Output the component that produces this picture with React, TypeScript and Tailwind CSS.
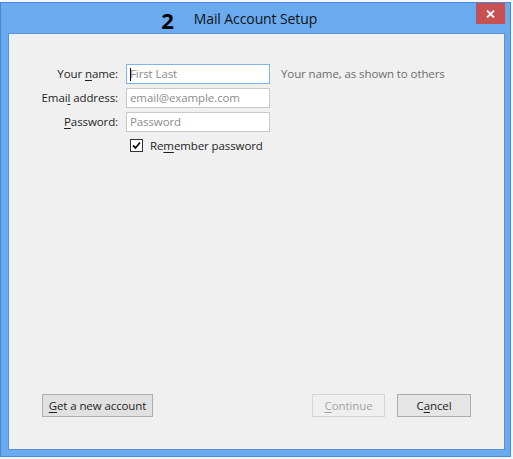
import React from "react";

const font = { fontFamily: '"Open Sans", "Noto Sans", sans-serif' };

function Field({ label, placeholder, focused = false, hint }: {
  label: [string, string, string];
  placeholder: string;
  focused?: boolean;
  hint?: string;
}) {
  return (
    <div className="flex h-[20px] items-center">
      <label className="w-[109px] shrink-0 text-right text-[#1e1e1e]">
        {label[0]}
        <span className="underline underline-offset-2">{label[1]}</span>
        {label[2]}
      </label>
      <div
        className={`ml-[8px] flex h-[20px] w-[144px] shrink-0 items-center border bg-white px-[3px] text-[#8c8c8c] ${
          focused ? "border-[#7eb4ea]" : "border-[#c9c9c9]"
        }`}
      >
        {focused ? <span className="mr-[-1px] h-[13px] w-px bg-black" /> : null}
        {placeholder}
      </div>
      {hint ? <span className="ml-[11px] text-[#6d6d6d]">{hint}</span> : null}
    </div>
  );
}

export default function App() {
  return (
    <div className="h-[459px] w-[513px] bg-[#f4f7fb] pt-[2px]" style={font}>
      <div className="flex h-[455px] w-[511px] flex-col border border-[#4a8ad4] bg-[#6aabf0] pb-[6px] pl-[7px] pr-[5px]">
        {/* title bar */}
        <div className="relative flex h-[30px] shrink-0 items-center justify-center">
          <span className="relative ml-[-2px] text-[14px] tracking-[-0.1px] text-[#111]">
            <span className="absolute right-full top-[-3px] mr-[20px] text-[22px] font-bold leading-[30px] text-black">2</span>
            Mail Account Setup
          </span>
          <button className="absolute right-[0px] top-0 flex h-[21px] w-[29px] items-center justify-center bg-[#c75050] text-white">
            <svg width="9" height="8" viewBox="0 0 9 8">
              <path d="M1 0.5 L8 7.5 M8 0.5 L1 7.5" stroke="white" strokeWidth="1.8" />
            </svg>
          </button>
        </div>

        {/* content */}
        <div className="flex flex-1 flex-col border border-[#5a92d2] bg-[#f0f0f0] pb-[32px] pt-[30px] text-[11.5px] tracking-[-0.1px]">
          <div className="flex flex-col gap-[4px]">
            <Field label={["Your ", "n", "ame:"]} placeholder="First Last" focused hint="Your name, as shown to others" />
            <Field label={["Emai", "l", " address:"]} placeholder="email@example.com" />
            <Field label={["", "P", "assword:"]} placeholder="Password" />
          </div>
          <div className="ml-[121px] mt-[5px] flex items-center">
            <span className="flex h-[13px] w-[13px] items-center justify-center border border-[#333] bg-white">
              <svg width="9" height="9" viewBox="0 0 9 9">
                <path d="M1 4.5 L3.5 7 L8 1.5" fill="none" stroke="#111" strokeWidth="1.8" />
              </svg>
            </span>
            <span className="ml-[7px] text-[#1e1e1e]">
              Re<span className="underline underline-offset-2">m</span>ember password
            </span>
          </div>

          <div className="flex-1" />

          <div className="flex items-center px-[33px]">
            <button className="h-[23px] w-[111px] border border-[#adadad] bg-[#e1e1e1] text-[#1e1e1e]">
              <span className="underline underline-offset-2">G</span>et a new account
            </button>
            <div className="flex-1" />
            <button disabled className="h-[23px] w-[73px] border border-[#d5d5d5] bg-[#efefef] text-[#a3a3a3]">
              <span className="underline underline-offset-2">C</span>ontinue
            </button>
            <button className="ml-[12px] h-[23px] w-[74px] border border-[#acacac] bg-[#e5e5e5] text-[#1e1e1e]">
              C<span className="underline underline-offset-2">a</span>ncel
            </button>
          </div>
        </div>
      </div>
    </div>
  );
}
